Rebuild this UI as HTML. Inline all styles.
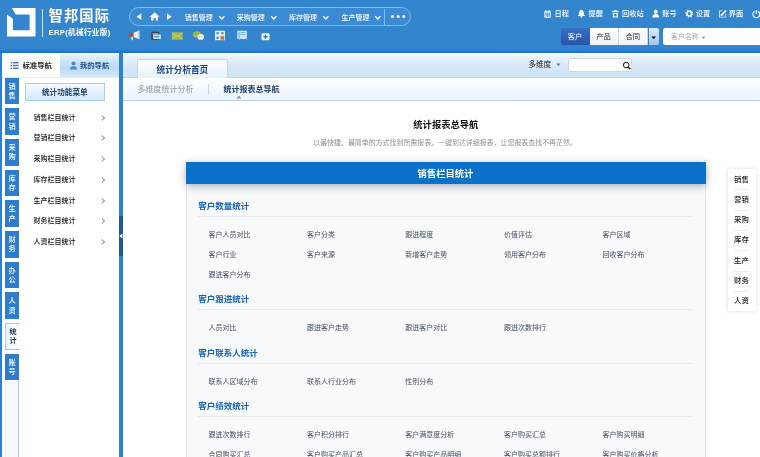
<!DOCTYPE html>
<html lang="zh-CN">
<head>
<meta charset="utf-8">
<title>智邦国际 ERP</title>
<style>
*{box-sizing:border-box;margin:0;padding:0}
html,body{width:760px;height:457px;overflow:hidden;background:#2c81d3}
body{font-family:"Liberation Sans","Noto Sans CJK SC",sans-serif;color:#333;position:relative;font-size:7px;line-height:1;will-change:transform}
.abs{position:absolute}
#hdr{left:0;top:0;width:760px;height:48px;background:#3385cd}
.t{position:absolute;white-space:nowrap;line-height:10px;height:10px}
/* header */
#brand{left:48.5px;top:8px;font-size:14.3px;line-height:16px;height:16px;font-weight:bold;color:#fff;letter-spacing:1.1px}
#brand2{left:48.5px;top:28px;font-size:7.6px;font-weight:bold;color:#fff;letter-spacing:.35px}
#pill{left:128.7px;top:7.4px;width:282.8px;height:19px;border:1.2px solid #84b9e8;border-radius:9.5px;background:#3a8ad4}
.nav{color:#fff;font-size:7px;top:12.9px;font-weight:500}
.top{color:#fff;font-size:7.2px;top:9.4px;font-weight:500}
.seg{top:28px;height:16.6px;font-size:7.3px;line-height:18.4px;overflow:hidden;text-align:center;background:linear-gradient(#fff,#eef3f9);color:#222;border-right:1px solid #c9d6e6}
/* left */
#lp{left:2px;top:52.7px;width:117.2px;height:405px;background:#fff}
.vt{left:5.2px;width:13.9px;height:26.5px;background:#2d7dcc;color:#fff;font-size:7.2px;font-weight:500;text-align:center;line-height:9.3px;padding-top:4.1px}
.mi{left:33.5px;font-size:7px;color:#111;font-weight:500}
.chev{left:99.8px;width:4.4px;height:4.4px;border-top:.8px solid #9a9a9a;border-right:.8px solid #9a9a9a;transform:rotate(45deg)}
/* main */
#main{left:122.9px;top:52.7px;width:638px;height:405px;background:#fff}
.item{font-size:7px;color:#445063}
.sec{left:198.3px;font-size:8.5px;font-weight:bold;color:#1566b8;line-height:11px;height:11px}
.ln{left:198px;width:494px;height:1px;background:#e6e9ed}
.rn{left:734px;font-size:7.4px;color:#222;font-weight:500}
.rl{left:734px;width:15px;height:1px;background:#e8ecf0}
</style>
</head>
<body>
<div id="hdr" class="abs"></div>
<div class="abs" style="left:0;top:50.4px;width:760px;height:2.4px;background:linear-gradient(#2a80d2,#1f75c8 60%,#1f75c8)"></div>

<!-- logo -->
<svg class="abs" style="left:7.4px;top:8.4px" width="28.5" height="28.5" viewBox="0 0 28.5 28.5">
  <path d="M4.9 0 H28.5 V28.5 H0 V6.4 L5.9 10.8 V22.3 H22.6 V6.4 H8.8 Z" fill="#fff"/>
</svg>
<div class="abs" style="left:42px;top:8.5px;width:1px;height:28.5px;background:#cfe2f5"></div>
<div id="brand" class="t">智邦国际</div>
<div id="brand2" class="t">ERP(机械行业版)</div>

<!-- nav pill -->
<div id="pill" class="abs"></div>
<svg class="abs" style="left:136px;top:12.3px" width="40" height="10" viewBox="0 0 40 10">
  <path d="M0.6 4.65 L5.3 1.2 V8.1 Z" fill="#fff"/>
  <path d="M13.8 4.7 L18.6 .3 L23.4 4.7 H22 V8.5 H19.7 V5.9 H17.5 V8.5 H15.2 V4.7 Z" fill="#fff"/>
  <path d="M35.7 4.65 L31 1.2 V8.1 Z" fill="#fff"/>
</svg>
<div class="t nav" style="left:184.8px">销售管理</div>
<div class="t nav" style="left:236.8px">采购管理</div>
<div class="t nav" style="left:289px">库存管理</div>
<div class="t nav" style="left:341.5px">生产管理</div>
<svg class="abs" style="left:218px;top:14.6px" width="164" height="6" viewBox="0 0 164 6" fill="none" stroke="#fff" stroke-width="1.3"><path d="M1.2 1.2 L3.8 4 L6.4 1.2"/><path d="M53.2 1.2 L55.8 4 L58.4 1.2"/><path d="M105.2 1.2 L107.8 4 L110.4 1.2"/><path d="M157.2 1.2 L159.8 4 L162.4 1.2"/></svg>
<div class="abs" style="left:384.4px;top:8.5px;width:1.1px;height:17px;background:#84b9e8"></div>
<div class="abs" style="left:390.5px;top:15.2px;width:3.1px;height:3.1px;border-radius:50%;background:#fff;box-shadow:5.65px 0 0 #fff,11.3px 0 0 #fff"></div>

<!-- shortcut icons -->
<svg class="abs" style="left:128px;top:29px" width="145" height="14" viewBox="0 0 145 14">
  <!-- megaphone -->
  <rect x="3.4" y="7.2" width="1.7" height="4" rx=".4" fill="#e8eef5"/><path d="M5.3 4 L11.3 1.6 V10.3 L5.3 7.7 Z" fill="#f4f7fa"/><path d="M9.6 2.3 L11.3 1.6 V10.3 L9.6 9.6 Z" fill="#cfd9e4"/><rect x="1.4" y="4" width="4.2" height="3.7" rx=".7" fill="#d8352c"/>
  <!-- folder/card -->
  <rect x="23.3" y="2.8" width="8" height="8" rx=".9" fill="#34414f"/><rect x="24.4" y="4.2" width="5.8" height="1.2" fill="#8fc4ee"/><rect x="25.2" y="5.6" width="7.7" height="4.3" rx=".7" fill="#d6e6f5"/><rect x="26.2" y="6.8" width="5" height="1.7" fill="#4d9ee3"/>
  <!-- mail -->
  <rect x="43.8" y="3.3" width="10.9" height="7.4" rx=".6" fill="#a7b84a"/><path d="M44.2 3.8 L49.25 7.6 L54.3 3.8 M44.2 10.3 L47.8 6.6 M54.3 10.3 L50.7 6.6" fill="none" stroke="#dcdc74" stroke-width=".8"/>
  <!-- wechat -->
  <ellipse cx="69" cy="5.4" rx="3.9" ry="3.2" fill="#9cc33c"/><circle cx="67.7" cy="4.6" r=".55" fill="#5d7d1e"/><circle cx="70.2" cy="4.6" r=".55" fill="#5d7d1e"/><ellipse cx="72.8" cy="7.9" rx="3.3" ry="2.9" fill="#f3f3ee"/><circle cx="71.8" cy="7.4" r=".5" fill="#8a6fa8"/><circle cx="73.9" cy="7.4" r=".5" fill="#8a6fa8"/>
  <!-- grid -->
  <rect x="87" y="1.7" width="10" height="9.6" rx=".6" fill="#dcebf8"/><rect x="87.5" y="2.2" width="4.3" height="4.1" fill="#eaf3fb"/><rect x="92.3" y="2.2" width="4.3" height="4.1" fill="#eaf3fb"/><rect x="87.5" y="6.8" width="4.3" height="4.1" fill="#eaf3fb"/><rect x="88.5" y="3.1" width="2.3" height="2.3" fill="#3d8fd9"/><rect x="93.3" y="3.1" width="2.3" height="2.3" fill="#3d8fd9"/><rect x="88.5" y="7.7" width="2.3" height="2.3" fill="#3d8fd9"/><rect x="92.6" y="7.1" width="3.6" height="3.6" fill="#dd6f1c"/>
  <!-- doc -->
  <path d="M109.2 1.8 H118.8 V10.6 L117 9.6 L115.2 10.6 L113.4 9.6 L111.6 10.6 L109.2 9.4 Z" fill="#c9e7f5"/><rect x="110.6" y="3.2" width="1" height="6" fill="#58a8d4"/><rect x="112.6" y="3.2" width="4.8" height=".9" fill="#58a8d4"/><rect x="112.6" y="5.2" width="4.8" height=".9" fill="#58a8d4"/><rect x="117.6" y="2.6" width="1" height="7" fill="#e9c9dd"/>
  <!-- plus -->
  <rect x="133.5" y="4.2" width="8" height="7" rx="1.3" fill="#f6f9fc"/><rect x="135.4" y="7.05" width="4.2" height="1.4" fill="#2b6fc2"/><rect x="136.8" y="5.65" width="1.4" height="4.2" fill="#2b6fc2"/>
</svg>

<!-- top right links -->
<svg class="abs" style="left:542px;top:8px" width="218" height="13" viewBox="0 0 218 13">
  <!-- calendar -->
  <path d="M2.4 3.2 H8.7 V9.8 H2.4 Z M3.5 4.6 V8.7 H4.5 V4.6 Z M5.1 4.6 V8.7 H6.1 V4.6 Z M6.7 4.6 V8.7 H7.7 V4.6 Z" fill="#fff" fill-rule="evenodd"/><rect x="3.5" y="2" width="1" height="1.6" fill="#fff"/><rect x="6.7" y="2" width="1" height="1.6" fill="#fff"/>
  <!-- bell -->
  <path d="M39.4 2 C37.5 2 37.1 3.7 37.1 5.1 C37.1 6.6 36.3 7.2 35.9 7.9 H42.9 C42.5 7.2 41.7 6.6 41.7 5.1 C41.7 3.7 41.3 2 39.4 2 Z" fill="#fff"/><circle cx="39.4" cy="8.7" r=".9" fill="#fff"/>
  <!-- trash -->
  <rect x="70.2" y="2.9" width="6.3" height="1.3" fill="#fff"/><rect x="72" y="2.1" width="2.7" height="1" fill="#fff"/><path d="M70.8 4.9 H75.9 V9.5 H70.8 Z M72.2 6 V8.4 H74.5 V6 Z" fill="#fff" fill-rule="evenodd"/>
  <!-- person -->
  <circle cx="113.7" cy="3.8" r="2.05" fill="#fff"/><path d="M110.3 9.5 C110.3 7 111.7 6.1 113.7 6.1 C115.7 6.1 117.1 7 117.1 9.5 Z" fill="#fff"/>
  <!-- gear -->
  <circle cx="147.3" cy="5.6" r="2.3" fill="none" stroke="#fff" stroke-width="1.5"/><circle cx="147.3" cy="5.6" r="3.4" fill="none" stroke="#fff" stroke-width="1.1" stroke-dasharray="1.33 1.34"/>
  <!-- edit -->
  <path d="M177 2.4 H180.6 V3.3 H177.9 V8.7 H183.3 V6 H184.2 V9.6 H177 Z" fill="#d3ecfb"/><path d="M178.6 8.1 L178.9 6.6 L183.5 1.9 L184.8 3.1 L180.2 7.8 Z" fill="#fff"/>
  <!-- power -->
  <path d="M212.3 3.5 A3.4 3.4 0 1 0 216.3 3.5" fill="none" stroke="#fff" stroke-width="1.1" stroke-linecap="round"/><rect x="213.75" y="1.9" width="1.1" height="4" rx=".5" fill="#fff"/>
</svg>
<div class="t top" style="left:554.6px">日程</div>
<div class="t top" style="left:588.5px">提醒</div>
<div class="t top" style="left:622px">回收站</div>
<div class="t top" style="left:662.2px">账号</div>
<div class="t top" style="left:695.7px">设置</div>
<div class="t top" style="left:728.8px">界面</div>

<!-- segmented + search -->
<div class="abs seg" style="left:560.5px;width:29px;background:linear-gradient(#3a6fc4,#2457a8);color:#fff;border-radius:2px 0 0 2px;border-right:0">客户</div>
<div class="abs seg" style="left:589.5px;width:29px">产品</div>
<div class="abs seg" style="left:618.5px;width:29.5px">合同</div>
<div class="abs seg" style="left:649px;width:10px;background:linear-gradient(#dcebfa,#9cc6ee);border:0;border-radius:0 2px 2px 0"></div>
<svg class="abs" style="left:651.4px;top:35.6px" width="6" height="4" viewBox="0 0 6 4"><path d="M.4 .5 H5 L2.7 3.3 Z" fill="#111"/></svg>
<div class="abs" style="left:663.4px;top:28px;width:110px;height:16.6px;background:#fff;border-radius:2.5px"></div>
<div class="t" style="left:671px;top:32.2px;font-size:7px;color:#a6a6a6">客户名称</div>
<svg class="abs" style="left:700.8px;top:35.6px" width="5" height="4" viewBox="0 0 5 4"><path d="M.3 .5 H4.5 L2.4 3.2 Z" fill="#a9a9a9"/></svg>

<!-- LEFT PANEL -->
<div id="lp" class="abs"></div>
<div class="abs" style="left:60px;top:53px;width:59px;height:24px;background:linear-gradient(#fff,#f4faff 5%,#e1f0fd 11%,#c6e1f9 42%,#badaf7 65%,#d8e9fa)"></div>
<div class="abs" style="left:2px;top:76.6px;width:117px;height:1px;background:#e3edf7"></div>
<svg class="abs" style="left:10.4px;top:61.4px" width="9" height="9" viewBox="0 0 9 9" fill="#3f6fd0"><rect x="0.6" y="1" width="1.4" height="1.4"/><rect x="3" y="1" width="5.6" height="1.4"/><rect x="0.6" y="3.8" width="1.4" height="1.4"/><rect x="3" y="3.8" width="5.6" height="1.4"/><rect x="0.6" y="6.6" width="1.4" height="1.4"/><rect x="3" y="6.6" width="5.6" height="1.4"/></svg>
<div class="t" style="left:22.4px;top:61.3px;font-size:7.4px;font-weight:bold;color:#2a2a2a">标准导航</div>
<svg class="abs" style="left:69px;top:60.5px" width="9" height="9" viewBox="0 0 9 9" fill="#4a86d0"><circle cx="4.5" cy="2.6" r="2"/><path d="M.9 8.6 C.9 6 2.4 5.2 4.5 5.2 C6.6 5.2 8.1 6 8.1 8.6 Z"/></svg>
<div class="t" style="left:79.8px;top:61.3px;font-size:7.4px;font-weight:bold;color:#24508f">我的导航</div>

<div class="abs" style="left:4.6px;top:380.5px;width:14.6px;height:80px;background:#f6fafe;border-left:.7px solid #dbe7f4;border-right:.9px solid #b2c5da"></div>
<div class="abs vt" style="top:77.7px">销<br>售</div>
<div class="abs vt" style="top:108.4px">营<br>销</div>
<div class="abs vt" style="top:139.0px">采<br>购</div>
<div class="abs vt" style="top:169.7px">库<br>存</div>
<div class="abs vt" style="top:200.4px">生<br>产</div>
<div class="abs vt" style="top:231.1px">财<br>务</div>
<div class="abs vt" style="top:261.7px">办<br>公</div>
<div class="abs vt" style="top:292.4px">人<br>资</div>
<div class="abs vt" style="top:323.1px;background:linear-gradient(to right,#e6f1fc,#fff 65%);color:#1a2f55;font-weight:bold;border:1px solid #a8c9ea;border-right:0;width:14.8px;padding-top:3.1px">统<br>计</div>
<div class="abs vt" style="top:353.7px">账<br>号</div>

<div class="abs" style="left:24.8px;top:83.3px;width:80px;height:18.2px;border:1px solid #a9cdec;background:linear-gradient(#f4faff,#d5e8f9);font-size:7.6px;font-weight:bold;color:#21426e;text-align:center;line-height:17.4px">统计功能菜单</div>

<div class="t mi" style="top:112.7px">销售栏目统计</div><div class="abs chev" style="top:115.7px"></div>
<div class="t mi" style="top:133.4px">营销栏目统计</div><div class="abs chev" style="top:136.4px"></div>
<div class="t mi" style="top:154.1px">采购栏目统计</div><div class="abs chev" style="top:157.1px"></div>
<div class="t mi" style="top:174.8px">库存栏目统计</div><div class="abs chev" style="top:177.8px"></div>
<div class="t mi" style="top:195.5px">生产栏目统计</div><div class="abs chev" style="top:198.5px"></div>
<div class="t mi" style="top:216.2px">财务栏目统计</div><div class="abs chev" style="top:219.2px"></div>
<div class="t mi" style="top:236.9px">人资栏目统计</div><div class="abs chev" style="top:239.9px"></div>

<!-- collapse handle -->
<div class="abs" style="left:119px;top:216px;width:4px;height:40px;background:#1d5896"></div>
<svg class="abs" style="left:119px;top:233px" width="4" height="6" viewBox="0 0 4 6"><path d="M3.4 .4 V5.6 L.4 3 Z" fill="#fff"/></svg>

<!-- MAIN -->
<div id="main" class="abs"></div>
<div class="abs" style="left:122.9px;top:52.7px;width:638px;height:25.2px;background:linear-gradient(#fff,#fff 5%,#eaf4fe 11%,#e3effb 30%,#d3e6f8 68%,#cfe3f6);border-bottom:1px solid #bcd3ea"></div>
<div class="abs" style="left:137.4px;top:59.3px;width:90.4px;height:18.6px;background:linear-gradient(#fdfeff,#f3f9fe 45%,#e6f1fb);border:1px solid #c3d9ee;border-bottom:0;border-radius:1.5px 1.5px 0 0"></div>
<div class="t" style="left:156.6px;top:64.8px;font-size:8.6px;line-height:11px;height:11px;font-weight:bold;color:#1c4583">统计分析首页</div>
<div class="t" style="left:528.4px;top:59.8px;font-size:7.6px;color:#222">多维度</div>
<svg class="abs" style="left:556.2px;top:63.4px" width="5" height="4" viewBox="0 0 5 4"><path d="M.3 .5 H4.5 L2.4 3.1 Z" fill="#4a78b8"/></svg>
<div class="abs" style="left:567.6px;top:58.2px;width:64px;height:14px;background:#fff;border:1px solid #cfd6de;border-radius:1.5px"></div>
<svg class="abs" style="left:621.5px;top:60.5px" width="10" height="10" viewBox="0 0 10 10" fill="none" stroke="#222" stroke-width="1.05"><circle cx="4.2" cy="4" r="2.75"/><path d="M6.2 6 L8.4 8.3" stroke-width="1.4"/></svg>

<div class="abs" style="left:122.9px;top:77.9px;width:638px;height:23.3px;background:linear-gradient(#fdfeff,#f4f9fe 50%,#eaf2fb);border-bottom:1px solid #c3d2e2"></div>
<div class="t" style="left:137.4px;top:85.2px;font-size:8px;color:#8a95a2">多维度统计分析</div>
<div class="abs" style="left:208.4px;top:84px;width:1px;height:11px;background:#cfd6dd"></div>
<div class="t" style="left:223.4px;top:85.4px;font-size:8px;font-weight:bold;color:#22436e">统计报表总导航</div>
<svg class="abs" style="left:235.6px;top:95.2px" width="6" height="4" viewBox="0 0 6 4"><path d="M.3 3.4 L2.9 .5 L5.5 3.4 Z" fill="#8a949f"/></svg>

<div class="t" style="left:413.3px;top:119.2px;font-size:9.3px;line-height:12px;height:12px;font-weight:bold;color:#111">统计报表总导航</div>
<div class="t" style="left:313.2px;top:138.3px;font-size:6.95px;color:#8b8f94">以最快捷、最简单的方式找到所需报表，一键到达详细报表，让您报表查找不再茫然。</div>

<!-- card -->
<div class="abs" style="left:185.6px;top:183px;width:520.6px;height:280px;background:#f8f9fb;border:1px solid #dfe3e8;border-top:0"></div>
<div class="abs" style="left:185.6px;top:162.3px;width:520.6px;height:21.6px;background:#0971c9;box-shadow:0 2px 8px rgba(30,45,70,.38)"></div>
<div class="t" style="left:417.6px;top:168px;font-size:9.3px;line-height:12px;height:12px;font-weight:bold;color:#fff">销售栏目统计</div>

<!--CB-->
<div class="t sec" style="top:201.0px">客户数量统计</div>
<div class="abs ln" style="top:215.9px"></div>
<div class="t item" style="left:208.5px;top:229.9px">客户人员对比</div>
<div class="t item" style="left:307px;top:229.9px">客户分类</div>
<div class="t item" style="left:405.3px;top:229.9px">跟进程度</div>
<div class="t item" style="left:504px;top:229.9px">价值评估</div>
<div class="t item" style="left:602.4px;top:229.9px">客户区域</div>
<div class="t item" style="left:208.5px;top:249.9px">客户行业</div>
<div class="t item" style="left:307px;top:249.9px">客户来源</div>
<div class="t item" style="left:405.3px;top:249.9px">新增客户走势</div>
<div class="t item" style="left:504px;top:249.9px">领用客户分布</div>
<div class="t item" style="left:602.4px;top:249.9px">回收客户分布</div>
<div class="t item" style="left:208.5px;top:269.9px">跟进客户分布</div>
<div class="t sec" style="top:294.3px">客户跟进统计</div>
<div class="abs ln" style="top:309.2px"></div>
<div class="t item" style="left:208.5px;top:323.2px">人员对比</div>
<div class="t item" style="left:307px;top:323.2px">跟进客户走势</div>
<div class="t item" style="left:405.3px;top:323.2px">跟进客户对比</div>
<div class="t item" style="left:504px;top:323.2px">跟进次数排行</div>
<div class="t sec" style="top:347.6px">客户联系人统计</div>
<div class="abs ln" style="top:362.5px"></div>
<div class="t item" style="left:208.5px;top:376.5px">联系人区域分布</div>
<div class="t item" style="left:307px;top:376.5px">联系人行业分布</div>
<div class="t item" style="left:405.3px;top:376.5px">性别分布</div>
<div class="t sec" style="top:400.9px">客户绩效统计</div>
<div class="abs ln" style="top:415.8px"></div>
<div class="t item" style="left:208.5px;top:429.8px">跟进次数排行</div>
<div class="t item" style="left:307px;top:429.8px">客户积分排行</div>
<div class="t item" style="left:405.3px;top:429.8px">客户满意度分析</div>
<div class="t item" style="left:504px;top:429.8px">客户购买汇总</div>
<div class="t item" style="left:602.4px;top:429.8px">客户购买明细</div>
<div class="t item" style="left:208.5px;top:449.8px">合同购买汇总</div>
<div class="t item" style="left:307px;top:449.8px">客户购买产品汇总</div>
<div class="t item" style="left:405.3px;top:449.8px">客户购买产品明细</div>
<div class="t item" style="left:504px;top:449.8px">客户购买总额排行</div>
<div class="t item" style="left:602.4px;top:449.8px">客户购买价格分析</div>
<!--/CB-->

<!-- right float nav -->
<div class="abs" style="left:727.6px;top:168.5px;width:28.2px;height:142px;background:#fff;box-shadow:0 0 4px rgba(100,120,150,.26)"></div>
<!--RN-->
<div class="t rn" style="top:174.6px">销售</div>
<div class="abs rl" style="top:189.4px"></div>
<div class="t rn" style="top:194.9px">营销</div>
<div class="abs rl" style="top:209.7px"></div>
<div class="t rn" style="top:215.1px">采购</div>
<div class="abs rl" style="top:229.9px"></div>
<div class="t rn" style="top:235.4px">库存</div>
<div class="abs rl" style="top:250.2px"></div>
<div class="t rn" style="top:255.7px">生产</div>
<div class="abs rl" style="top:270.5px"></div>
<div class="t rn" style="top:275.9px">财务</div>
<div class="abs rl" style="top:290.8px"></div>
<div class="t rn" style="top:296.2px">人资</div>
<!--/RN-->
</body>
</html>
